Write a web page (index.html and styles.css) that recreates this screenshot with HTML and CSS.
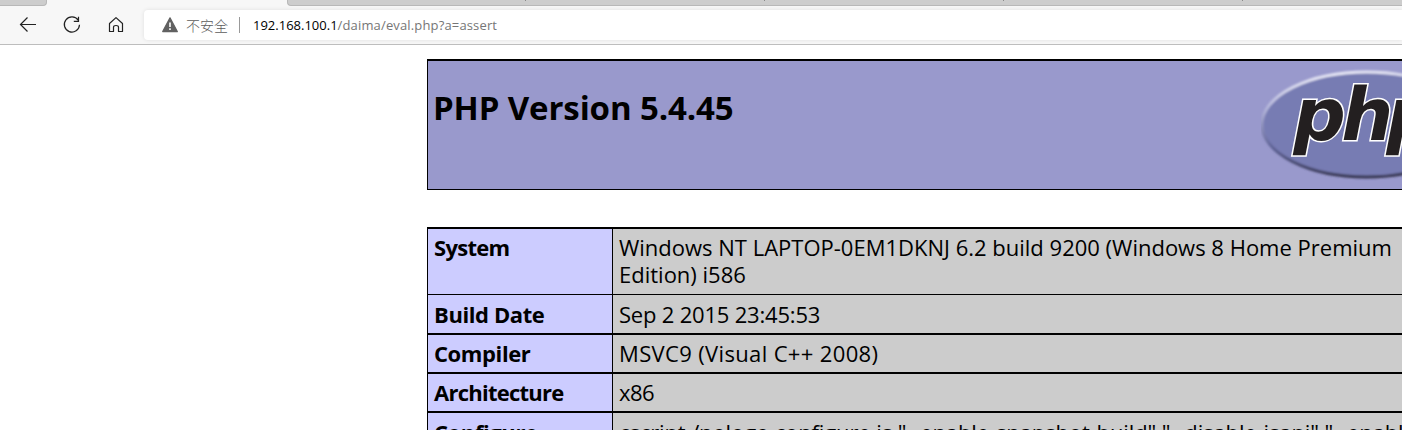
FILE: index.html
```html
<!DOCTYPE html>
<html lang="zh-CN">
<head>
<meta charset="utf-8">
<title>phpinfo()</title>
<link rel="stylesheet" href="styles.css">
</head>
<body>
<header class="browser">
  <div class="tabs">
    <div class="tab tab-left"></div>
    <div class="tab-active"></div>
    <div class="tab tab-rest"><i></i><i></i><i></i><i></i></div>
  </div>
  <nav class="toolbar">
    <svg class="nav-icons" width="144" height="38" viewBox="0 6 144 38" fill="none" stroke="#222" stroke-width="1.2">
      <path d="M27.5 17.5L20.5 24.5L27.5 31.5M20.5 24.5H36"/>
      <path d="M78.2 20.2A7.6 7.6 0 1 0 79.5 24.8M78.5 16.8V21.3H73.8"/>
      <path d="M109.5 23.5L116 17.6L122.5 23.5V31.5H118.5V27.3Q118.5 25.5 116 25.5Q113.5 25.5 113.5 27.3V31.5H109.5Z" stroke-linejoin="round"/>
    </svg>
    <div class="address">
      <svg class="warning" width="16" height="16" viewBox="0 0 16 16">
        <path d="M8 .8L15.3 14.6H.7Z" fill="#616161" stroke="#616161" stroke-width="1.2" stroke-linejoin="round"/>
        <path d="M8 5.5V10M8 11.3V12.9" stroke="#fff" stroke-width="1.6"/>
      </svg>
      <span class="insecure">不安全</span>
      <span class="separator"></span>
      <span class="url"><b>192.168.100.1</b>/daima/eval.php?a=assert</span>
    </div>
  </nav>
</header>
<main class="info">
  <section class="banner">
    <h1>PHP Version 5.4.45</h1>
    <svg class="logo" width="141" height="127" viewBox="1261 61 141 127">
      <defs>
        <linearGradient id="rim" x1="0.2" y1="0" x2="0.4" y2="1">
          <stop offset="0" stop-color="#f0f0fa"/>
          <stop offset=".3" stop-color="#b4b6da"/>
          <stop offset=".65" stop-color="#5f6396"/>
          <stop offset="1" stop-color="#35354f"/>
        </linearGradient>
        <filter id="soft"><feGaussianBlur stdDeviation=".8"/></filter>
      </defs>
      <ellipse cx="1366.5" cy="124.5" rx="104.5" ry="52.5" fill="#777bb3" stroke="url(#rim)" stroke-width="3" filter="url(#soft)"/>
      <text class="logo-text" x="0 48 93" y="0" transform="translate(1289.5 140) skewX(-11)">php</text>
    </svg>
  </section>
  <section class="details">
    <div class="row system"><div class="key">System</div><div class="value">Windows NT LAPTOP-0EM1DKNJ 6.2 build 9200 (Windows 8 Home Premium<br>Edition) i586</div></div>
    <div class="row build"><div class="key">Build Date</div><div class="value">Sep 2 2015 23:45:53</div></div>
    <div class="row compiler"><div class="key">Compiler</div><div class="value">MSVC9 (Visual C++ 2008)</div></div>
    <div class="row architecture"><div class="key">Architecture</div><div class="value">x86</div></div>
    <div class="row configure"><div class="key">Configure</div><div class="value">cscript /nologo configure.js "--enable-snapshot-build" "--disable-isapi" "--enable</div></div>
  </section>
</main>
</body>
</html>
```
FILE: styles.css
```css
* { box-sizing: border-box; }
body {
  margin: 0;
  height: 430px;
  overflow: hidden;
  background: #fff;
  color: #000;
  font-family: "Open Sans", "Noto Sans CJK SC", sans-serif;
}
.browser { height: 45px; background: #f7f7f7; border-bottom: 1px solid #bdbdbd; }
.tabs { display: flex; height: 6px; }
.tab { background: #cdcdcd; border-bottom: 1px solid #b8b8b8; }
.tab-left { width: 47px; border-right: 1px solid #b8b8b8; border-bottom-right-radius: 4px; }
.tab-active { width: 240px; }
.tab-rest { flex: 1; display: flex; gap: 238px; padding-left: 237px; border-left: 1px solid #b8b8b8; border-bottom-left-radius: 4px; }
.tab-rest i { flex: none; width: 1px; height: 1px; background: #8a8a8a; }
.toolbar { display: flex; height: 38px; }
.nav-icons { flex: none; }
.address {
  display: flex;
  flex: 1;
  align-items: center;
  height: 30px;
  margin-top: 4px;
  padding-left: 18px;
  background: #fff;
  border-radius: 4px 0 0 4px;
  box-shadow: 0 0 4px rgba(0, 0, 0, .1);
  font-size: 13px;
  white-space: nowrap;
}
.insecure { width: 43px; margin-left: 8px; color: #5c5c5c; font-family: "Noto Sans CJK SC", sans-serif; font-size: 14px; font-weight: 300; }
.separator { width: 1px; height: 16px; margin: 0 13px 0 10px; background: #999; }
.url { color: #767676; letter-spacing: .15px; }
.url b { color: #000; font-weight: 400; letter-spacing: 0; }
.info { width: 975px; margin: 14px 0 0 427px; overflow: hidden; white-space: nowrap; }
.banner {
  display: flex;
  justify-content: space-between;
  height: 131px;
  border: solid #000;
  border-width: 2px 0 1px 1px;
  background: #9999cc;
}
h1 { margin: 24px 0 0 5px; font-size: 33px; line-height: 46px; font-weight: 700; letter-spacing: -.12px; }
.logo-text {
  font: 700 73px "DejaVu Sans", sans-serif;
  fill: #231f20;
  stroke: #fff;
  stroke-width: 3px;
  paint-order: stroke;
}
.details { margin-top: 37px; border-left: 1px solid #000; font-size: 22px; line-height: 27px; }
.row { display: flex; height: 39px; border-top: 2px solid #000; background: #ccc; }
.key { flex: none; width: 185px; padding: 5px 0 0 6px; border-right: 1px solid #000; background: #ccccff; font-weight: 700; letter-spacing: -.4px; }
.value { flex: 1; padding: 5px 0 0 6px; }
.system { height: 67px; }
.system .key { letter-spacing: -.7px; }
.build { border-top-width: 1px; }
.build .key, .build .value { padding-top: 6px; }
.build .value { letter-spacing: -.2px; }
.compiler .value { letter-spacing: .35px; }
.architecture .key { letter-spacing: -.75px; }
.architecture .value { letter-spacing: -.6px; }
.configure .key, .configure .value { padding-top: 6px; }
.configure .value { letter-spacing: -.12px; }
```
